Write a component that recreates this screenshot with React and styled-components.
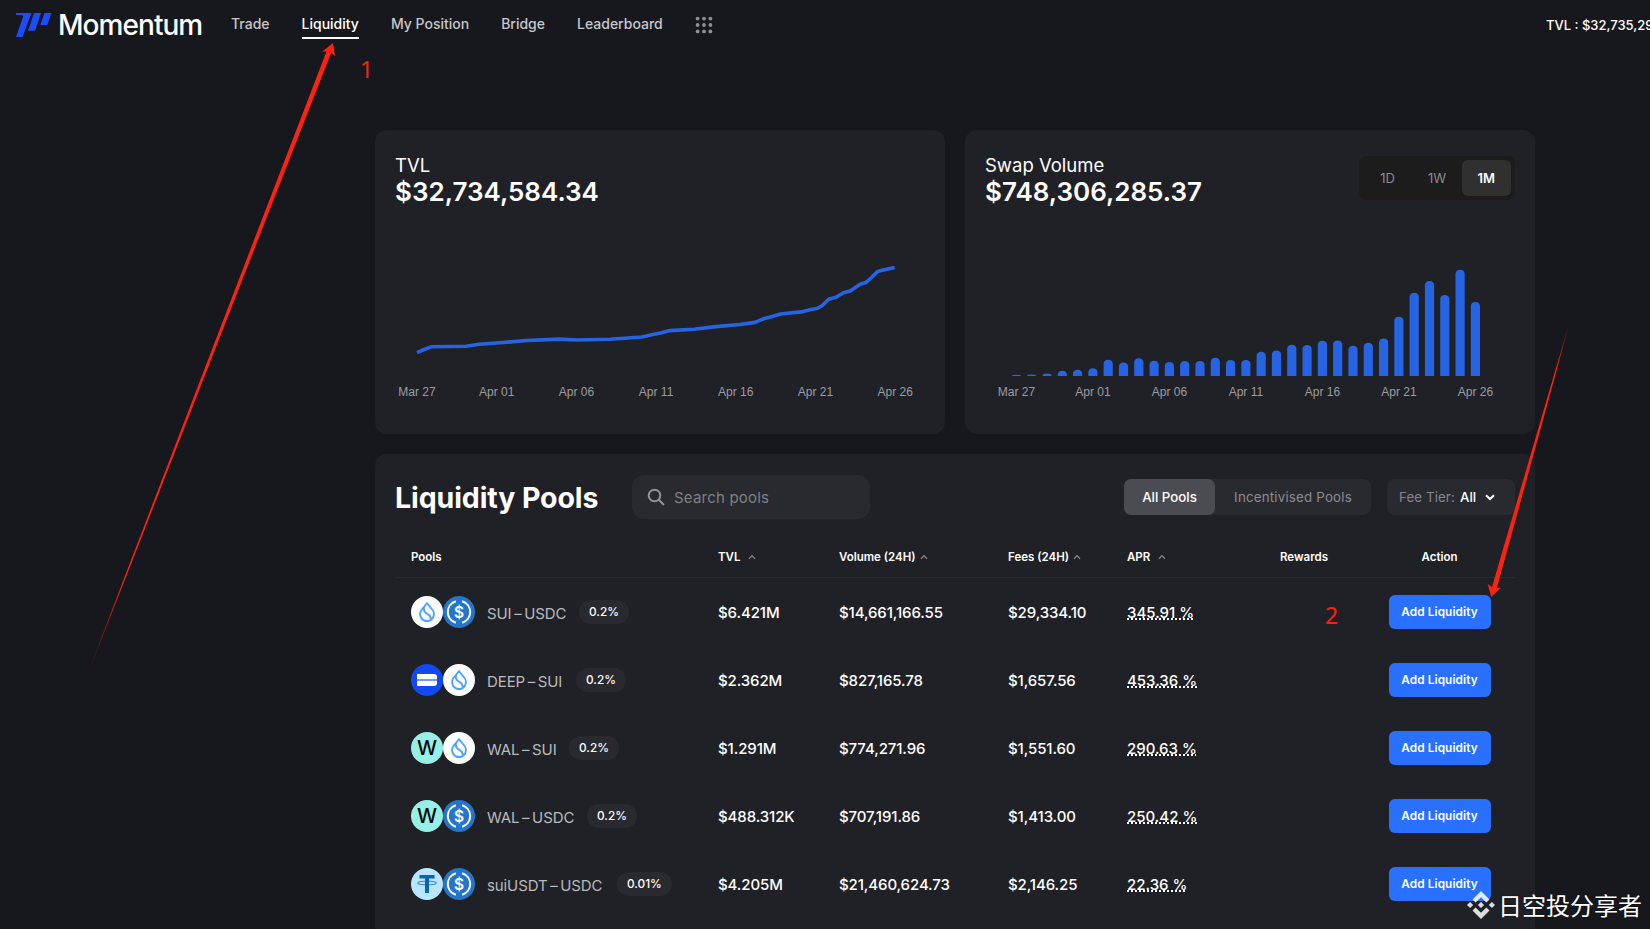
import React from "react";
import styled, { createGlobalStyle } from "styled-components";

const GlobalStyle = createGlobalStyle`
  * { box-sizing: border-box; }
  body {
    margin: 0;
    background: #17181d;
    color: #fff;
    font-family: Inter, "Liberation Sans", sans-serif;
    overflow: hidden;
  }
`;

const Page = styled.div`
  position: relative;
  height: 929px;
  overflow: hidden;
`;

/* ---------- header ---------- */

const Header = styled.header`
  display: flex;
  align-items: center;
  height: 50px;
  padding-left: 16px;
  white-space: nowrap;
`;

const Brand = styled.div`
  display: flex;
  align-items: center;
  gap: 6px;
  width: 215px;
  font-size: 28px;
  font-weight: 500;
  letter-spacing: -0.95px;
`;

const Nav = styled.nav`
  display: flex;
  align-items: center;
  gap: 32px;
  flex: 1;
`;

const NavLink = styled.a`
  height: 28px;
  line-height: 26px;
  font-size: 14px;
  font-weight: 500;
  letter-spacing: ${(p) => p.$track || 0}px;
  color: ${(p) => (p.$active ? "#fff" : "#c6c7ca")};
  border-bottom: 2px solid ${(p) => (p.$active ? "#fff" : "transparent")};
`;

const HeaderTvl = styled.div`
  width: 104px;
  overflow: hidden;
  font-size: 13px;
  font-weight: 500;
  letter-spacing: 0;
`;

/* ---------- stat cards ---------- */

const Main = styled.main`
  width: 1160px;
  margin: 80px 0 0 375px;
`;

const Cards = styled.section`
  display: grid;
  grid-template-columns: 570px 570px;
  gap: 20px;
`;

const Card = styled.article`
  height: 304px;
  padding: 20px;
  border-radius: 12px;
  background: #202126;
`;

const CardHead = styled.div`
  display: flex;
  justify-content: space-between;
  height: 104px;
`;

const CardLabel = styled.div`
  margin-top: 2px;
  font-size: 18.5px;
  line-height: 26px;
  letter-spacing: ${(p) => p.$track || 0}px;
`;

const CardValue = styled.div`
  font-size: 26px;
  line-height: 28px;
  font-weight: 600;
  letter-spacing: ${(p) => p.$track || 0}px;
`;

const RangeToggle = styled.div`
  display: flex;
  width: 156px;
  height: 44px;
  margin-top: 6px;
  padding: 4px;
  border-radius: 8px;
  background: #1c1c1d;
`;

const RangeOption = styled.button`
  flex: 1;
  border: 0;
  border-radius: 6px;
  padding: 0;
  font: ${(p) => (p.$active ? 600 : 400)} 13px Inter, sans-serif;
  color: ${(p) => (p.$active ? "#fff" : "#8b8c91")};
  background: ${(p) => (p.$active ? "#303031" : "transparent")};
`;

const Chart = styled.svg`
  display: block;
  width: 530px;
  height: 160px;
  font: 12px "Liberation Sans", sans-serif;
  fill: #9b9da3;
`;

/* ---------- pools panel ---------- */

const Panel = styled.section`
  height: 500px;
  margin-top: 20px;
  padding: 21px 20px 0;
  border-radius: 12px;
  background: #202126;
`;

const Toolbar = styled.div`
  display: flex;
  align-items: center;
  height: 44px;
`;

const Title = styled.h1`
  width: 237px;
  margin: 0;
  font-size: 28.5px;
  font-weight: 700;
  letter-spacing: -0.1px;
  white-space: nowrap;
`;

const SearchBox = styled.label`
  display: flex;
  align-items: center;
  gap: 9px;
  width: 238px;
  height: 44px;
  padding-left: 15px;
  border-radius: 12px;
  background: #292a2f;
  color: #7f8086;
  font-size: 15px;
  letter-spacing: 0.2px;
`;

const Tabs = styled.div`
  display: flex;
  width: 247px;
  height: 36px;
  margin: 0 16px 0 auto;
  border-radius: 8px;
  background: #292a2f;
`;

const Tab = styled.button`
  width: ${(p) => p.$width}px;
  border: 0;
  border-radius: 7px;
  padding: 0;
  font: ${(p) => (p.$active ? 500 : 400)} 13.3px Inter, sans-serif;
  letter-spacing: ${(p) => p.$track}px;
  color: ${(p) => (p.$active ? "#fff" : "#8b8c92")};
  background: ${(p) => (p.$active ? "#4b4c51" : "transparent")};
`;

const FeeSelect = styled.div`
  display: flex;
  align-items: center;
  width: 128px;
  height: 36px;
  padding-left: 12px;
  border-radius: 8px;
  background: #292a2f;
  color: #85868c;
  font-size: 13.3px;
  letter-spacing: 0.1px;

  b {
    margin: 0 9px 0 5px;
    font-weight: 500;
    color: #fff;
  }
`;

const GridRow = styled.div`
  display: grid;
  grid-template-columns: 307px 121px 169px 119px 113px 128px 143px;
  grid-template-columns: 307px 121px 169px 119px 113px 128px 143px;
  grid-template-columns: 307px 121px 169px 119px 113px 128px 143px;
  align-items: center;
  padding-left: 16px;
  white-space: nowrap;
`;

const HeadRow = styled(GridRow)`
  grid-template-columns: 307px 121px 169px 119px 113px 128px 143px;
  height: 59px;
  padding-top: 19px;
  padding-bottom: 2px;
  border-bottom: 1px solid #2a2b30;
  font-size: 11.5px;
  font-weight: 600;
`;

const HeadCell = styled.div`
  display: flex;
  align-items: center;
  justify-content: ${(p) => (p.$center ? "center" : "flex-start")};
  gap: ${(p) => p.$gap || 0}px;
  letter-spacing: ${(p) => p.$track || 0}px;
`;

const PoolRow = styled(GridRow)`
  height: 68px;
  font-size: 15px;
  font-weight: 500;
`;

const Pool = styled.div`
  display: flex;
  align-items: center;
`;

const PoolName = styled.span`
  width: ${(p) => p.$width}px;
  margin: 2px 8px 0 12px;
  font-size: 15px;
  font-weight: 400;
  letter-spacing: ${(p) => p.$track}px;
  word-spacing: -1.5px;
  color: #b9babd;
`;

const FeePill = styled.span`
  height: 24px;
  padding: 0 10px;
  border-radius: 12px;
  background: #292a2f;
  font-size: 11.8px;
  line-height: 24px;
`;

const Amount = styled.div`
  letter-spacing: -0.1px;
`;

const Apr = styled.span`
  justify-self: start;
  text-decoration: underline dotted #fff 2px;
  text-underline-offset: 1px;
  text-decoration-skip-ink: none;
`;

const AddButton = styled.button`
  justify-self: center;
  width: 102px;
  height: 34px;
  border: 0;
  border-radius: 6px;
  padding: 0;
  background: #2970ff;
  color: #fff;
  font: 600 11.8px Inter, sans-serif;
  letter-spacing: 0.1px;
`;

const Coin = styled.span`
  display: flex;
  align-items: center;
  justify-content: center;
  width: 32px;
  height: 32px;
  border-radius: 50%;
  background: ${(p) => p.$bg};
  color: #08090a;
  font-size: 20px;
  font-weight: 500;
`;

/* ---------- things drawn over the page ---------- */

const Overlay = styled.svg`
  position: absolute;
  inset: 0;
  pointer-events: none;
  font: 23px "Noto Sans", sans-serif;
`;

const Watermark = styled.div`
  position: absolute;
  right: 8px;
  bottom: 6px;
  display: flex;
  align-items: center;
  gap: 3px;
  font: 24px/36px "Noto Sans CJK SC", sans-serif;
  color: #fff;
  text-shadow: 0 0 2px rgba(0, 0, 0, 0.6);
`;

const Logo = () => (
  <svg width="36" height="24" viewBox="0 0 36 24" fill="#1a4dff">
    <path d="M0 0H15.5L6.5 24H0L7.2 3.4Q6.8 2 5 2H0Z" />
    <path d="M18 0H25L19 17.7H12Z" />
    <path d="M28.5 0H35.5L31.3 12H24.3Z" />
  </svg>
);

const DotGrid = () => (
  <svg width="18" height="18" viewBox="0 0 18 18" fill="#8f9094">
    {[2.6, 9, 15.4].map((y) =>
      [2.6, 9, 15.4].map((x) => <circle key={`${x}-${y}`} cx={x} cy={y} r="1.9" />)
    )}
  </svg>
);

const Caret = () => (
  <svg width="8" height="6" viewBox="0 0 8 6" fill="none" stroke="#85868b" strokeWidth="1.3">
    <path d="M1 4.8L4 1.6L7 4.8" />
  </svg>
);

const SUI_DROP =
  "M240.057 159.914C255.698 179.553 265.052 204.39 265.052 231.407C265.052 258.424 255.414 284.019 239.362 303.768L237.971 305.475L237.608 303.31C237.292 301.477 236.929 299.613 236.502 297.749C228.46 262.421 202.265 232.134 159.148 207.597C130.029 191.071 113.361 171.195 108.985 148.586C106.157 133.972 108.258 119.294 112.318 106.717C116.379 94.157 122.414 83.619 127.549 77.283L144.328 56.775C147.267 53.173 152.781 53.173 155.719 56.775L240.057 159.914ZM266.584 139.422L154.155 1.967C152.007 -0.656 147.993 -0.656 145.845 1.967L33.432 139.422L33.268 139.64C12.587 165.381 0 198.112 0 233.798C0 316.9 67.163 384 150 384C232.838 384 300 316.9 300 233.798C300 198.112 287.415 165.381 266.734 139.64ZM60.338 159.472L70.387 147.164L70.687 149.439C70.924 151.24 71.224 153.041 71.572 154.858C78.081 189.001 101.322 217.456 140.173 239.496C173.952 258.724 193.622 280.828 199.278 305.064C201.648 315.176 202.059 325.129 201.032 333.835L200.969 334.372L200.479 334.609C185.233 342.05 168.09 346.237 149.984 346.237C86.455 346.237 34.948 294.826 34.948 231.391C34.948 204.153 44.444 179.142 60.338 159.472Z";

const coins = {
  SUI: () => (
    <Coin $bg="#fff">
      <svg width="16" height="20" viewBox="0 0 300 384" fill="#4da2ff">
        <path d={SUI_DROP} />
      </svg>
    </Coin>
  ),
  USDC: () => (
    <Coin $bg="#2775ca">
      <svg width="32" height="32" viewBox="0 0 32 32">
        <g fill="none" stroke="#fff" strokeWidth="2">
          <path d="M12.8 5.2A11.3 11.3 0 0 0 12.8 26.8" />
          <path d="M19.2 5.2A11.3 11.3 0 0 1 19.2 26.8" />
        </g>
        <text x="16" y="21.6" textAnchor="middle" fontSize="15.5" fontWeight="600" fill="#fff">
          $
        </text>
      </svg>
    </Coin>
  ),
  DEEP: () => (
    <Coin $bg="#1448f0">
      <svg width="20" height="12" viewBox="0 0 20 12" fill="#fff">
        <path d="M0 0H17Q20 0 20 3V5.3H0Z" />
        <path d="M0 6.7H20V9Q20 12 17 12H0Z" />
        <path d="M0 5.3H20V6.7H0Z" opacity="0.35" />
      </svg>
    </Coin>
  ),
  WAL: () => <Coin $bg="#97f0e5">W</Coin>,
  suiUSDT: () => (
    <Coin $bg="#b9e6ff">
      <svg width="22" height="20" viewBox="0 0 22 20" fill="#0b62ad">
        <path d="M3.5 1H18.5V4.5H13V19H9V4.5H3.5Z" />
        <ellipse cx="11" cy="9" rx="9.6" ry="1.9" fill="none" stroke="#0b62ad" strokeWidth="0.8" />
      </svg>
    </Coin>
  ),
};

/* Vertices of the TVL line in chart coordinates. */
const tvlLine = [
  [22, 98.7], [28, 96], [36, 92.8], [71.2, 92.2], [84, 90.2], [108, 88.5], [132, 86.5],
  [164, 85.1], [182, 86], [215, 85.2], [247, 83], [258, 80.5], [265.5, 79], [275, 76.6],
  [299, 75.2], [321, 72.6], [345, 70.5], [360, 68.4], [369, 64.6], [374.5, 63.2],
  [385.7, 60], [408, 57.6], [415, 55.7], [422.7, 54.2], [427, 51.8], [433.7, 45.2],
  [441, 43.2], [448.5, 38.8], [455.2, 37], [465.2, 30.2], [470.8, 28.6], [476.5, 23.5],
  [482.6, 17.6], [488.5, 16.1], [499.6, 13.4],
];

const volumes = [
  1.2, 1.4, 2.4, 5.2, 6.2, 7.8, 16.2, 13.5, 17.8, 15.2, 13.9, 14.9, 14.9, 18.2, 15.9, 15.9,
  24.2, 25.5, 31.2, 30.9, 35.2, 35.5, 30.2, 33.2, 37.5, 59.2, 83.2, 94.9, 80.9, 106.2, 73.9,
];

const dates = ["Mar 27", "Apr 01", "Apr 06", "Apr 11", "Apr 16", "Apr 21", "Apr 26"];

const pools = [
  { pair: ["SUI", "USDC"], fee: "0.2%", tvl: "$6.421M", vol: "$14,661,166.55", fees: "$29,334.10", apr: "345.91 %", width: 84, track: -0.1 },
  { pair: ["DEEP", "SUI"], fee: "0.2%", tvl: "$2.362M", vol: "$827,165.78", fees: "$1,657.56", apr: "453.36 %", width: 81, track: -0.1 },
  { pair: ["WAL", "SUI"], fee: "0.2%", tvl: "$1.291M", vol: "$774,271.96", fees: "$1,551.60", apr: "290.63 %", width: 74, track: -0.1 },
  { pair: ["WAL", "USDC"], fee: "0.2%", tvl: "$488.312K", vol: "$707,191.86", fees: "$1,413.00", apr: "250.42 %", width: 92, track: -0.1 },
  { pair: ["suiUSDT", "USDC"], fee: "0.01%", tvl: "$4.205M", vol: "$21,460,624.73", fees: "$2,146.25", apr: "22.36 %", width: 122, track: -0.1 },
];

const barPath = (x, h) => {
  const r = Math.min(4.5, h);
  const w = 9.2;
  const top = 118 - 0.0 - h + 4;
  return `M${x} 122V${top + r}Q${x} ${top} ${x + w / 2} ${top}Q${x + w} ${top} ${x + w} ${top + r}V122Z`;
};

export default function App() {
  return (
    <Page>
      <GlobalStyle />
      <Header>
        <Brand>
          <Logo />
          Momentum
        </Brand>
        <Nav>
          <NavLink>Trade</NavLink>
          <NavLink $active>Liquidity</NavLink>
          <NavLink>My Position</NavLink>
          <NavLink>Bridge</NavLink>
          <NavLink>Leaderboard</NavLink>
          <DotGrid />
        </Nav>
        <HeaderTvl>TVL : $32,735,297.10</HeaderTvl>
      </Header>

      <Main>
        <Cards>
          <Card>
            <CardHead>
              <div>
                <CardLabel>TVL</CardLabel>
                <CardValue>$32,734,584.34</CardValue>
              </div>
            </CardHead>
            <Chart viewBox="0 0 530 160">
              <polyline
                points={tvlLine.map((p) => [p[0], p[1] + 0].join(",")).join(" ")}
                fill="none"
                stroke="#2664e3"
                strokeWidth="3.6"
                strokeLinejoin="round"
              />
              {dates.map((d, i) => (
                <text key={d} x={22 + i * 79.7} y="142" textAnchor="middle">{d}</text>
              ))}
            </Chart>
          </Card>
          <Card>
            <CardHead>
              <div>
                <CardLabel>Swap Volume</CardLabel>
                <CardValue>$748,306,285.37</CardValue>
              </div>
              <RangeToggle>
                <RangeOption>1D</RangeOption>
                <RangeOption>1W</RangeOption>
                <RangeOption $active>1M</RangeOption>
              </RangeToggle>
            </CardHead>
            <Chart viewBox="0 0 530 160">
              {volumes.map((v, i) => (
                <path key={i} d={barPath(26.8 + i * 15.3, v)} fill="#2664e3" />
              ))}
              {dates.map((d, i) => (
                <text key={d} x={31.4 + i * 76.5} y="142" textAnchor="middle">{d}</text>
              ))}
            </Chart>
          </Card>
        </Cards>

        <Panel>
          <Toolbar>
            <Title>Liquidity Pools</Title>
            <SearchBox>
              <svg width="18" height="18" viewBox="0 0 18 18" fill="none" stroke="#929397" strokeWidth="2">
                <circle cx="7.5" cy="7.5" r="5.8" />
                <path d="M11.7 11.7L17 17" />
              </svg>
              Search pools
            </SearchBox>
            <Tabs>
              <Tab $active $width={91} $track={0}>All Pools</Tab>
              <Tab $width={156} $track={0.2}>Incentivised Pools</Tab>
            </Tabs>
            <FeeSelect>
              Fee Tier:<b>All</b>
              <svg width="10" height="7" viewBox="0 0 10 7" fill="none" stroke="#fff" strokeWidth="2">
                <path d="M1 1.2L5 5L9 1.2" />
              </svg>
            </FeeSelect>
          </Toolbar>

          <HeadRow>
            <HeadCell>Pools</HeadCell>
            <HeadCell $gap={8}>TVL<Caret /></HeadCell>
            <HeadCell $gap={4}>Volume (24H)<Caret /></HeadCell>
            <HeadCell $gap={4}>Fees (24H)<Caret /></HeadCell>
            <HeadCell $gap={8}>APR<Caret /></HeadCell>
            <HeadCell $center>Rewards</HeadCell>
            <HeadCell $center>Action</HeadCell>
          </HeadRow>

          {pools.map((p) => {
            const A = coins[p.pair[0]];
            const B = coins[p.pair[1]];
            return (
              <PoolRow key={p.vol}>
                <Pool>
                  <A />
                  <B />
                  <PoolName $width={p.width} $track={p.track}>{p.pair.join(" – ")}</PoolName>
                  <FeePill>{p.fee}</FeePill>
                </Pool>
                <Amount>{p.tvl}</Amount>
                <Amount>{p.vol}</Amount>
                <Amount>{p.fees}</Amount>
                <Apr>{p.apr}</Apr>
                <span />
                <AddButton>Add Liquidity</AddButton>
              </PoolRow>
            );
          })}
        </Panel>
      </Main>

      <Overlay width="1650" height="929" viewBox="0 0 1650 929">
        <defs>
          <linearGradient id="tailLeft" gradientUnits="userSpaceOnUse" x1="90" y1="668" x2="126" y2="575">
            <stop offset="0" stopColor="#ff2211" stopOpacity="0" />
            <stop offset="1" stopColor="#ff2211" />
          </linearGradient>
          <linearGradient id="tailRight" gradientUnits="userSpaceOnUse" x1="1568" y1="328" x2="1556" y2="370">
            <stop offset="0" stopColor="#ff2211" stopOpacity="0.1" />
            <stop offset="1" stopColor="#ff2211" />
          </linearGradient>
        </defs>
        <path d="M333 43L335 56L331.2 52.8L90.3 668.2L89.7 667.8L326.6 51.2L322 51.7Z" fill="url(#tailLeft)" />
        <path d="M1491.3 597L1487.7 584L1492 587L1567.7 328L1568.3 328L1496.8 588.3L1501 587.5Z" fill="url(#tailRight)" />
        <text x="360" y="78" fill="#f52314">1</text>
        <text x="1325" y="624" fill="#f52314">2</text>
      </Overlay>

      <Watermark>
        <svg width="28" height="28" viewBox="0 0 28 28" fill="#fff" opacity="0.85">
          <path d="M14 0L22.5 8.5L19.4 11.6L14 6.2L8.6 11.6L5.5 8.5Z" />
          <path d="M14 28L22.5 19.5L19.4 16.4L14 21.8L8.6 16.4L5.5 19.5Z" />
          <path d="M14 10.9L17.1 14L14 17.1L10.9 14Z" />
          <path d="M3.1 10.9L6.2 14L3.1 17.1L0 14Z" />
          <path d="M24.9 10.9L28 14L24.9 17.1L21.8 14Z" />
        </svg>
        日空投分享者
      </Watermark>
    </Page>
  );
}
